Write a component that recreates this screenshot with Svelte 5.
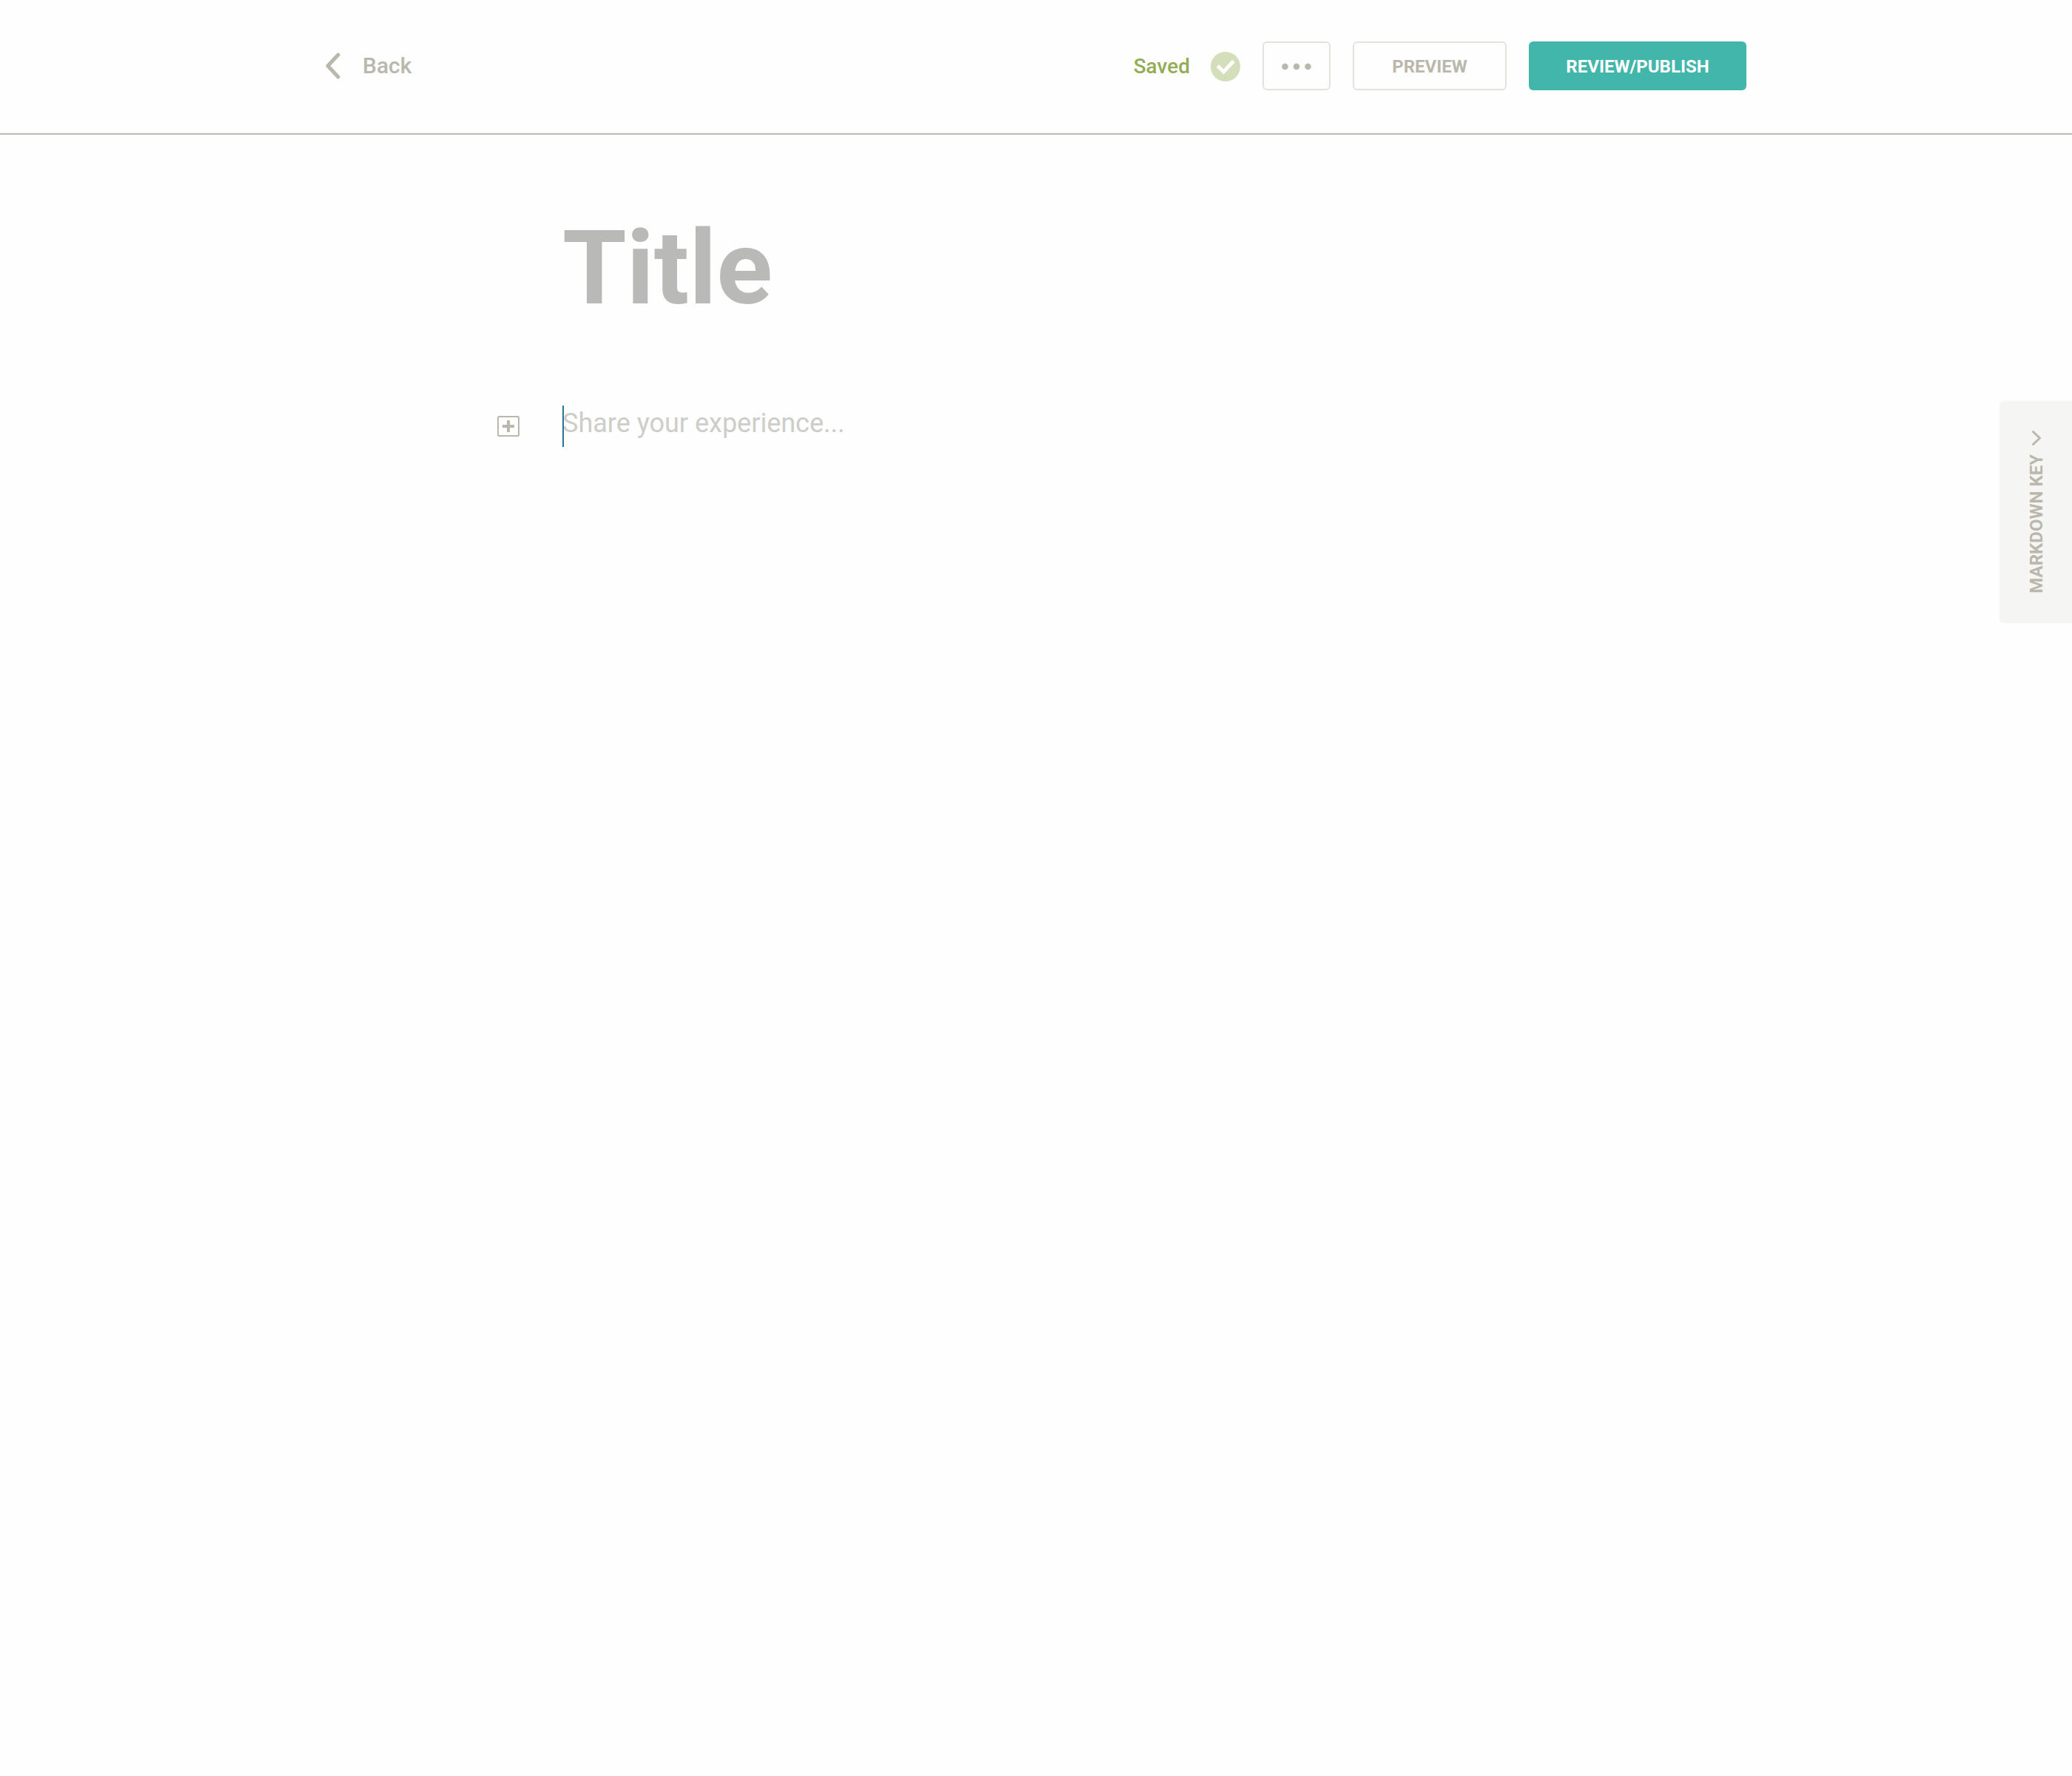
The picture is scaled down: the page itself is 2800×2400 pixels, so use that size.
<script>
  let title = $state('');
  let story = $state('');
</script>

<div class="page">
  <header class="topbar">
    <div class="topbar-inner">
      <a class="back" href="#back">
        <svg class="back-icon" viewBox="0 0 20 36" aria-hidden="true">
          <path d="M17 3 3 18l14 15" />
        </svg>
        <span>Back</span>
      </a>
      <div class="actions">
        <div class="status" role="status">
          <span>Saved</span>
          <svg class="status-icon" viewBox="0 0 40 40" aria-hidden="true">
            <circle cx="20" cy="20" r="20" />
            <path d="M9.500 19 17.500 27 31 12.500" />
          </svg>
        </div>
        <button class="btn more" type="button" aria-label="More options">
          <svg class="more-icon" viewBox="0 0 40 8" aria-hidden="true">
            <circle cx="4.500" cy="4" r="4.300" />
            <circle cx="20" cy="4" r="4.300" />
            <circle cx="35.500" cy="4" r="4.300" />
          </svg>
        </button>
        <button class="btn preview" type="button">PREVIEW</button>
        <button class="btn publish" type="button">REVIEW/PUBLISH</button>
      </div>
    </div>
  </header>

  <main class="editor">
    <input class="title" type="text" placeholder="Title" aria-label="Title" bind:value={title} />
    <div class="story-row">
      <button class="insert" type="button" aria-label="Insert block">
        <svg viewBox="0 0 30 28" aria-hidden="true">
          <rect x="1" y="1" width="28" height="26" rx="1.500" />
          <path d="M7 14h16M15 6v16" />
        </svg>
      </button>
      <div class="story-box">
        <textarea
          class="story"
          placeholder="Share your experience..."
          aria-label="Story"
          bind:value={story}
        ></textarea>
        {#if !story}<span class="caret"></span>{/if}
      </div>
    </div>
  </main>

  <button class="markdown-key" type="button">
    <svg viewBox="0 0 12 20" aria-hidden="true">
      <path d="M1.500 1.500 10.500 10l-9 8.500" />
    </svg>
    <span>MARKDOWN KEY</span>
  </button>
</div>

<style>
  :global(body) {
    margin: 0;
    background: #fefefe;
  }

  .page {
    position: relative;
    min-height: 100vh;
    font-family: Roboto, 'Liberation Sans', sans-serif;
    color: #bab7ad;
  }

  button,
  input,
  textarea {
    box-sizing: border-box;
    margin: 0;
    padding: 0;
    border: 0;
    outline: 0;
    background: none;
    font-family: inherit;
    color: inherit;
  }

  button {
    cursor: pointer;
  }

  svg {
    display: block;
    fill: none;
  }

  .topbar {
    border-bottom: 2px solid #bab9b3;
  }

  .topbar-inner {
    display: flex;
    align-items: center;
    justify-content: space-between;
    box-sizing: border-box;
    max-width: 1920px;
    margin: 0 auto;
    padding: 56px 0 58px;
  }

  .back {
    display: flex;
    align-items: center;
    gap: 30px;
    font-size: 30px;
    font-weight: 500;
    line-height: 38px;
    color: inherit;
    text-decoration: none;
  }

  .back-icon {
    width: 20px;
    height: 36px;
    stroke: #bab7ad;
    stroke-width: 5;
    stroke-linecap: round;
    stroke-linejoin: round;
  }

  .actions {
    display: flex;
    align-items: center;
    gap: 30px;
  }

  .status {
    display: flex;
    align-items: center;
    gap: 28px;
    padding-top: 2px;
    font-size: 28px;
    font-weight: 500;
    line-height: 38px;
    color: #94ac55;
  }

  .status-icon {
    width: 40px;
    height: 40px;
  }

  .status-icon circle {
    fill: #d4deba;
  }

  .status-icon path {
    stroke: #fefefe;
    stroke-width: 5;
  }

  .btn {
    display: flex;
    align-items: center;
    justify-content: center;
    height: 66px;
    padding-top: 2px;
    border-radius: 6px;
    font-size: 24px;
    font-weight: 700;
    line-height: 28px;
  }

  .more,
  .preview {
    border: 2px solid #e3e3de;
  }

  .more {
    width: 92px;
  }

  .more-icon {
    width: 40px;
    height: 8px;
    fill: #bab7ad;
    overflow: visible;
  }

  .preview {
    width: 208px;
  }

  .publish {
    width: 294px;
    background: #42b6aa;
    color: #fefefe;
  }

  .editor {
    box-sizing: border-box;
    max-width: 1280px;
    margin: 0 auto;
    padding-top: 96px;
  }

  .title {
    display: block;
    width: 100%;
    height: 168px;
    font-size: 140px;
    font-weight: 700;
    line-height: 168px;
    color: #4a4a4a;
  }

  .title::placeholder {
    color: #b9b9b7;
    opacity: 1;
  }

  .story-row {
    display: flex;
    align-items: flex-start;
    gap: 58px;
    margin: 102px 0 0 -88px;
  }

  .insert {
    flex: none;
    width: 30px;
    height: 28px;
    margin-top: 14px;
  }

  .insert svg {
    width: 30px;
    height: 28px;
    stroke: #bab7ad;
    stroke-width: 2;
  }

  .insert path {
    stroke-width: 4;
  }

  .story-box {
    position: relative;
    flex: 1;
  }

  .story {
    display: block;
    width: 100%;
    min-height: 400px;
    font-size: 36px;
    line-height: 48px;
    color: #4a4a4a;
    caret-color: #2c7399;
    resize: none;
  }

  .story::placeholder {
    color: #cdcdc9;
    opacity: 1;
  }

  .caret {
    position: absolute;
    top: 0;
    left: 0;
    width: 2px;
    height: 56px;
    background: #2c7399;
    pointer-events: none;
  }

  .story:focus + .caret {
    display: none;
  }

  .markdown-key {
    position: absolute;
    top: 542px;
    right: 0;
    display: flex;
    flex-direction: column;
    align-items: center;
    gap: 12px;
    width: 98px;
    height: 300px;
    padding: 40px 0 0 2px;
    border-radius: 6px 0 0 6px;
    background: #f5f5f3;
    font-size: 24px;
    font-weight: 700;
    line-height: 28px;
  }

  .markdown-key svg {
    width: 12px;
    height: 20px;
    stroke: #bab7ad;
    stroke-width: 3;
    stroke-linecap: round;
    stroke-linejoin: round;
  }

  .markdown-key span {
    writing-mode: vertical-rl;
    transform: rotate(180deg);
  }
</style>
